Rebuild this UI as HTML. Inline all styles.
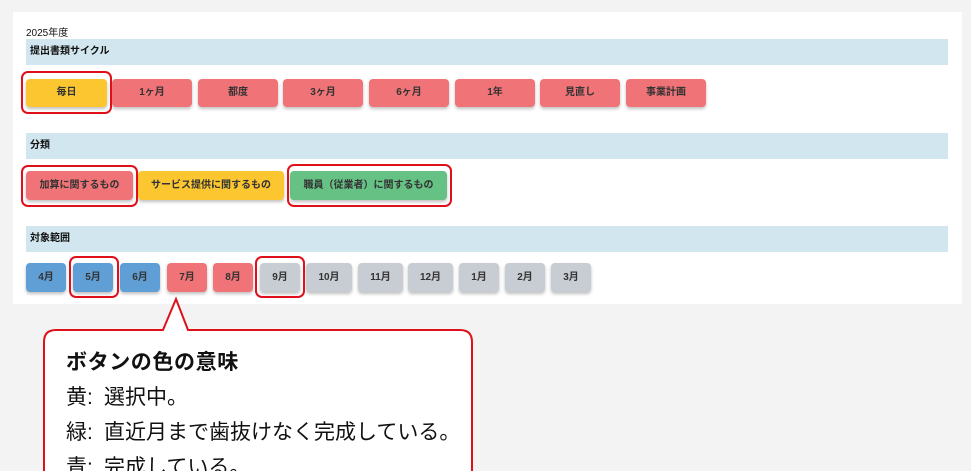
<!DOCTYPE html>
<html style="overflow:hidden;height:471px"><head><meta charset="utf-8"><style>
body{margin:0;width:971px;height:471px;background:#f3f3f3;position:relative;overflow:hidden;font-family:"Liberation Sans","Noto Sans CJK JP",sans-serif;}
.a{position:absolute}
.panel{left:13px;top:12px;width:949px;height:292px;background:#fff}
.bar{left:26px;width:922px;height:26px;background:#d1e6ee;font-size:10px;font-weight:bold;line-height:26px;padding-left:4px;box-sizing:border-box;color:#111}
.b{border-radius:4px;font-size:10px;font-weight:bold;text-align:center;color:#333;box-shadow:0 2px 3px rgba(0,0,0,.25);box-sizing:border-box}
.r{background:#f07377}.y{background:#fbc630}.g{background:#65c184}.bl{background:#5f9fd6}.gr{background:#c8ccd3}
.o{border:2px solid #e0101a;border-radius:7px}
.c{display:inline-block;width:38px}
</style></head><body>
<div class="a panel"></div>
<div class="a" style="left:26px;top:24px;font-size:10px;color:#111">2025年度</div>
<div class="a bar" style="top:39px">提出書類サイクル</div>
<div class="a bar" style="top:133px">分類</div>
<div class="a bar" style="top:226px">対象範囲</div>

<div class="a b y" style="left:26px;top:79px;width:81px;height:28px;line-height:28px">毎日</div>
<div class="a b r" style="left:112px;top:79px;width:80px;height:28px;line-height:28px">1ヶ月</div>
<div class="a b r" style="left:198px;top:79px;width:80px;height:28px;line-height:28px">都度</div>
<div class="a b r" style="left:283px;top:79px;width:80px;height:28px;line-height:28px">3ヶ月</div>
<div class="a b r" style="left:369px;top:79px;width:80px;height:28px;line-height:28px">6ヶ月</div>
<div class="a b r" style="left:455px;top:79px;width:80px;height:28px;line-height:28px">1年</div>
<div class="a b r" style="left:540px;top:79px;width:80px;height:28px;line-height:28px">見直し</div>
<div class="a b r" style="left:626px;top:79px;width:80px;height:28px;line-height:28px">事業計画</div>
<div class="a o" style="left:21px;top:71px;width:87px;height:39px"></div>

<div class="a b r" style="left:26px;top:171px;width:107px;height:29px;line-height:29px">加算に関するもの</div>
<div class="a b y" style="left:138px;top:171px;width:146px;height:29px;line-height:29px">サービス提供に関するもの</div>
<div class="a b g" style="left:290px;top:171px;width:157px;height:29px;line-height:29px">職員（従業者）に関するもの</div>
<div class="a o" style="left:21px;top:165px;width:113px;height:38px"></div>
<div class="a o" style="left:287px;top:164px;width:161px;height:39px"></div>

<div class="a b bl" style="left:26px;top:263px;width:40px;height:29px;line-height:29px">4月</div>
<div class="a b bl" style="left:73px;top:263px;width:40px;height:29px;line-height:29px">5月</div>
<div class="a b bl" style="left:120px;top:263px;width:40px;height:29px;line-height:29px">6月</div>
<div class="a b r" style="left:167px;top:263px;width:40px;height:29px;line-height:29px">7月</div>
<div class="a b r" style="left:213px;top:263px;width:40px;height:29px;line-height:29px">8月</div>
<div class="a b gr" style="left:260px;top:263px;width:40px;height:29px;line-height:29px">9月</div>
<div class="a b gr" style="left:306px;top:263px;width:46px;height:29px;line-height:29px">10月</div>
<div class="a b gr" style="left:358px;top:263px;width:45px;height:29px;line-height:29px">11月</div>
<div class="a b gr" style="left:408px;top:263px;width:45px;height:29px;line-height:29px">12月</div>
<div class="a b gr" style="left:459px;top:263px;width:40px;height:29px;line-height:29px">1月</div>
<div class="a b gr" style="left:505px;top:263px;width:40px;height:29px;line-height:29px">2月</div>
<div class="a b gr" style="left:551px;top:263px;width:40px;height:29px;line-height:29px">3月</div>
<div class="a o" style="left:69px;top:256px;width:46px;height:38px"></div>
<div class="a o" style="left:255px;top:256px;width:46px;height:38px"></div>

<svg class="a" style="left:0;top:0" width="971" height="471">
<path d="M44 480 V342 Q44 330 56 330 H163 L176 299 L188 330 H460 Q472 330 472 342 V480" fill="#fff" stroke="#e0101a" stroke-width="2"/>
</svg>
<div class="a" style="left:66px;top:345px;font-size:21px;line-height:35px;color:#111;height:126px;overflow:hidden;white-space:nowrap">
<div style="font-weight:bold;letter-spacing:0.6px">ボタンの色の意味</div>
<div><span class="c">黄:</span>選択中。</div>
<div><span class="c">緑:</span>直近月まで歯抜けなく完成している。</div>
<div><span class="c">青:</span>完成している。</div>
</div>
</body></html>
